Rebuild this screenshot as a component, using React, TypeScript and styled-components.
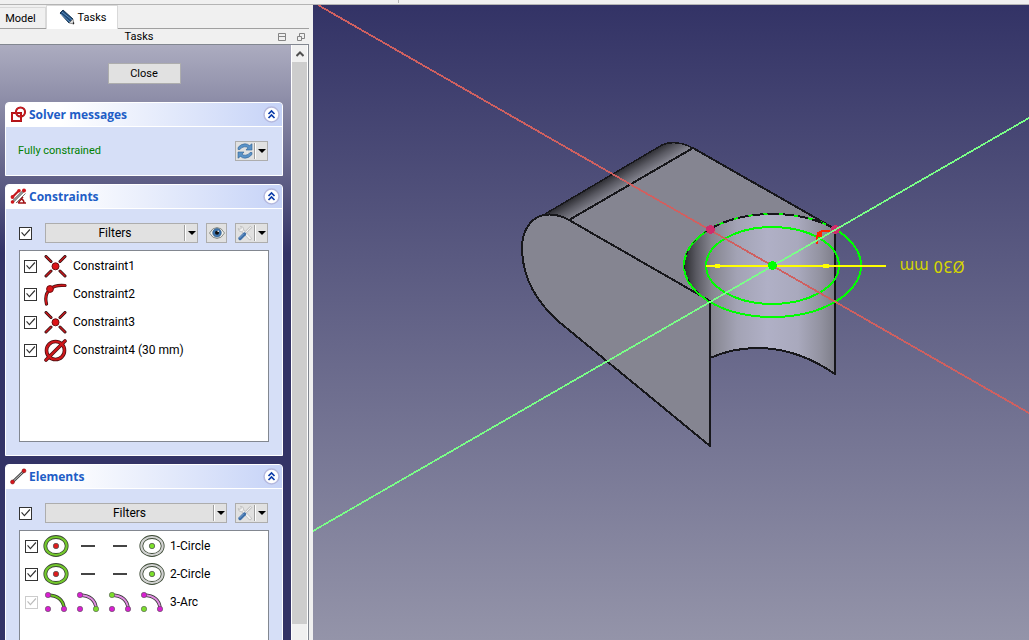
import React from 'react';
import styled, { createGlobalStyle } from 'styled-components';

const GlobalStyle = createGlobalStyle`
  *, *::before, *::after { box-sizing: border-box; }
  body {
    margin: 0;
    background: #f0f0f0;
    color: #000;
    font-family: Roboto, "Open Sans", sans-serif;
    font-size: 11px;
    line-height: 16px;
  }
  button, input { font: inherit; color: inherit; margin: 0; }
`;

const Window = styled.div`
  display: flex;
  flex-direction: column;
  height: 100vh;
  overflow: hidden;
`;

const ToolStrip = styled.div`
  flex: none;
  height: 5px;
  padding-left: 398px;
  border-bottom: 1px solid #b4b4b4;

  &::before {
    content: "";
    display: block;
    width: 1px;
    height: 3px;
    background: #b4b4b4;
  }
`;

const Workspace = styled.div`
  flex: 1;
  min-height: 0;
  display: flex;
`;

const Sidebar = styled.aside`
  flex: none;
  width: 313px;
  padding-right: 4px;
  display: flex;
  flex-direction: column;
`;

const TabBar = styled.div`
  flex: none;
  display: flex;
  align-items: flex-end;
  height: 24px;
  border-bottom: 1px solid #a0a0a0;
`;

const Tab = styled.button<{ $active?: boolean }>`
  display: flex;
  align-items: center;
  justify-content: center;
  gap: 2px;
  width: ${p => (p.$active ? 72 : 46)}px;
  height: ${p => (p.$active ? 24 : 21)}px;
  margin-bottom: ${p => (p.$active ? -1 : 0)}px;
  padding: ${p => (p.$active ? '0' : '2px 4px 0 0')};
  background: ${p => (p.$active ? '#fff' : '#f0f0f0')};
  border: 1px solid #d9d9d9;
  border-bottom: 0;
  border-left-width: ${p => (p.$active ? 1 : 0)}px;
`;

const DockTitle = styled.div`
  flex: none;
  display: grid;
  grid-template-columns: 1fr auto 1fr;
  align-items: center;
  height: 15px;
  padding: 0 3px 0 0;

  h1 { margin: 0 0 0 -28px; font: inherit; grid-column: 2; }
`;

const DockButtons = styled.div`
  display: flex;
  justify-content: flex-end;
  gap: 8px;
`;

const GhostButton = styled.button`
  display: flex;
  padding: 0;
  border: 0;
  background: none;
`;

const DockBody = styled.div`
  flex: 1;
  min-height: 0;
  display: flex;
  border-top: 1px solid #828790;
  border-right: 1px solid #828790;
`;

const TaskArea = styled.div`
  flex: 1;
  min-width: 0;
  display: flex;
  flex-direction: column;
  gap: 8px;
  overflow: hidden;
  padding: 18px 8px 0 5px;
  background: linear-gradient(#acacc0 0, #9090aa 50px, #333366 208px);
`;

const CloseButton = styled.button`
  align-self: center;
  flex: none;
  width: 73px;
  height: 21px;
  margin-bottom: 10px;
  padding: 0;
  border: 1px solid #adadad;
  background: #e1e1e1;
`;

const ScrollBar = styled.div`
  flex: none;
  width: 17px;
  display: flex;
  flex-direction: column;
  border-left: 1px solid #fff;
  border-right: 1px solid #fff;
  background: #f0f0f0;
`;

const ScrollArrow = styled.button`
  display: flex;
  align-items: center;
  justify-content: center;
  height: 17px;
  padding: 0;
  border: 0;
  background: none;
`;

const ScrollThumb = styled.div`
  flex: 1;
  margin-bottom: 16px;
  background: #cdcdcd;
`;

const Group = styled.section`
  flex: none;
  overflow: hidden;
  border: 1px solid #fff;
  border-radius: 4px 4px 0 0;
  background: #d6dff7;
`;

const GroupHeader = styled.header`
  display: flex;
  align-items: center;
  gap: 2px;
  height: 24px;
  padding: 0 2px 0 4px;
  border-bottom: 1px solid #fff;
  background: linear-gradient(90deg, #fff 20%, #c6d3f7);

  h2 {
    flex: 1;
    margin: 0;
    font-family: "Open Sans", "Noto Sans", sans-serif;
    font-size: 12px;
    line-height: 16px;
    font-weight: 700;
    color: #215dc6;
  }
`;

const GroupBody = styled.div<{ $compact?: boolean }>`
  padding: ${p => (p.$compact ? '14px 14px 14px 12px' : '14px 13px 13px')};
`;

const Bar = styled.div`
  display: flex;
  align-items: center;
  gap: 8px;
  height: 20px;
  margin: 0 1px 7px 0;

  > input { margin-right: 5px; }
`;

const SolverRow = styled.div`
  display: flex;
  align-items: center;
  justify-content: space-between;
  height: 20px;
  color: #008000;
`;

const Tool = styled.button<{ $width?: number }>`
  display: flex;
  align-items: center;
  ${p => (p.$width ? `flex: none; width: ${p.$width}px;` : 'flex: 1;')}
  height: 20px;
  padding: 0;
  border: 1px solid #adadad;
  background: #e1e1e1;
`;

const ToolFace = styled.span`
  flex: 1;
  display: flex;
  align-items: center;
  justify-content: center;
  font-size: 12px;
`;

const DropArrow = styled.span`
  flex: none;
  display: flex;
  align-items: center;
  justify-content: center;
  width: 13px;
  height: 16px;
  padding-left: 1px;
  border-left: 1px solid #a0a0a0;
  box-shadow: inset 1px 0 #fff;

  &::after {
    content: "";
    border: 4px solid transparent;
    border-top-color: #000;
    border-bottom: 0;
  }
`;

const Check = styled.input.attrs({ type: 'checkbox' })`
  appearance: none;
  flex: none;
  width: 13px;
  height: 13px;
  border: 1px solid #333;
  background: #fff;

  &:checked::before {
    content: "";
    display: block;
    width: 11px;
    height: 11px;
    background: #333;
    clip-path: polygon(10% 48%, 18% 40%, 40% 66%, 86% 14%, 94% 22%, 40% 82%);
  }
  &:disabled { border-color: #ccc; }
  &:disabled::before { background: #bcbcbc; }
`;

const List = styled.ul<{ $indent: number }>`
  margin: 0;
  padding: 1px ${p => p.$indent}px;
  list-style: none;
  height: 192px;
  border: 1px solid #828790;
  background: #fff;
  font-size: 12px;
`;

const Item = styled.li`
  label {
    display: flex;
    align-items: center;
    height: 28px;
  }
`;

const ItemIcon = styled.span`
  display: flex;
  margin: 0 6px 0 7px;
`;

const ElementIcons = styled.span`
  display: flex;
  gap: 6px;
  margin: 0 5px 0 5px;
`;

const Viewport = styled.main`
  flex: 1;
  min-width: 0;
  background: linear-gradient(#333366, #9494a9);

  svg { display: block; width: 100%; height: 100%; }
`;

const PencilIcon = () => (
  <svg width="18" height="18" viewBox="0 0 18 18" aria-hidden="true">
    <path d="M2 4 5 1 15 10 11 14Z" fill="#204a77" stroke="#173655" />
    <path d="M3 5 12 13M4 3 14 11" stroke="#5f93c4" strokeWidth="1" />
    <path d="M11 14 15 10 16 15Z" fill="#ddd" stroke="#555" strokeWidth="0.6" />
    <path d="M14.500 14 16 13V15.500Z" fill="#111" />
  </svg>
);

const CollapseIcon = () => (
  <svg width="17" height="17" viewBox="0 0 17 17" aria-hidden="true">
    <circle cx="8.500" cy="8.500" r="7.500" fill="#fff" stroke="#b5b9de" strokeWidth="1.500" />
    <path d="M5.500 8 8.500 5 11.500 8M5.500 12 8.500 9 11.500 12" fill="none" stroke="#0c3caa" strokeWidth="1.700" />
  </svg>
);

const SketchIcon = () => (
  <svg width="17" height="17" viewBox="0 0 17 17" aria-hidden="true">
    <g fill="none" stroke="#8f0f13" strokeWidth="2">
      <path d="M2 7H11V15H2Z" />
      <circle cx="10.500" cy="6" r="4.500" />
    </g>
    <g fill="none" stroke="#d81b20" strokeWidth="1.200">
      <path d="M2 7H11V15H2Z" />
      <circle cx="10.500" cy="6" r="4.500" />
    </g>
  </svg>
);

const ConstraintsIcon = () => (
  <svg width="17" height="17" viewBox="0 0 17 17" aria-hidden="true">
    <path d="M2.500 14 14 2.500" stroke="#555" strokeWidth="2.400" />
    <path d="M2.500 14 14 2.500" stroke="#ddd" strokeWidth="0.900" />
    <path d="M6 15 15.500 5.500" stroke="#777" strokeWidth="1" />
    <path d="M2 9.500 8.500 3" stroke="#c0151a" strokeWidth="2.200" />
    <path d="M8 15 13 9M8 15H16M11.500 11Q14 12 14 15" fill="none" stroke="#a01216" strokeWidth="1.400" />
    <circle cx="2.500" cy="14" r="1.800" fill="#cf171c" />
    <circle cx="14" cy="2.500" r="2" fill="#cf171c" />
    <circle cx="9" cy="2.800" r="1.800" fill="#cf171c" />
    <circle cx="2.500" cy="9" r="1.900" fill="#cf171c" />
  </svg>
);

const LineIcon = () => (
  <svg width="17" height="17" viewBox="0 0 17 17" aria-hidden="true">
    <path d="M2.500 14 14 3" stroke="#444" strokeWidth="2.600" />
    <path d="M2.500 14 14 3" stroke="#ccc" strokeWidth="1" />
    <circle cx="2.500" cy="14" r="2" fill="#d8161c" stroke="#7d1013" strokeWidth="0.500" />
    <circle cx="14" cy="2.800" r="2" fill="#d8161c" stroke="#7d1013" strokeWidth="0.500" />
  </svg>
);

const RefreshIcon = () => (
  <svg width="16" height="16" viewBox="0 0 16 16" aria-hidden="true">
    <g fill="#5b93c8" stroke="#2f6296" strokeWidth="0.600">
      <path d="M1 6.500V4.500Q4 0.800 8 0.800Q10.500 0.800 12.500 2.600L15 0.800V7H9L11 4.800Q9.500 3.600 7.500 3.800Q4.500 4 3 6.500Z" />
      <path d="M15 9.500V11.500Q12 15.200 8 15.200Q5.500 15.200 3.500 13.400L1 15.200V9H7L5 11.200Q6.500 12.400 8.500 12.200Q11.500 12 13 9.500Z" />
    </g>
  </svg>
);

const EyeIcon = () => (
  <svg width="16" height="14" viewBox="0 0 16 14" aria-hidden="true">
    <path d="M0.500 7Q3.500 1.500 8 1.500T15.500 7Q12.500 12.500 8 12.500T0.500 7Z" fill="#f4f4f0" stroke="#868a85" />
    <circle cx="8" cy="6.800" r="4.300" fill="#3f76ad" stroke="#24507f" strokeWidth="0.600" />
    <circle cx="8" cy="6.800" r="2" fill="#111" />
    <circle cx="9.200" cy="5.300" r="0.800" fill="#fff" />
  </svg>
);

const SettingsIcon = () => (
  <svg width="16" height="16" viewBox="0 0 16 16" aria-hidden="true">
    <path d="M5 5 13 13.500" stroke="#b4b4b4" strokeWidth="3.200" strokeLinecap="round" />
    <path d="M5 5 13 13.500" stroke="#f2f2f2" strokeWidth="2" strokeLinecap="round" />
    <path d="M1.200 3.500Q1.200 6.800 4.800 6.800L6.800 5Q7 1.500 3.500 1.200L4.500 3 3 4.500Z" fill="#f2f2f2" stroke="#b4b4b4" strokeWidth="0.700" />
    <path d="M8 8 14.500 1.500" stroke="#a8a8a8" strokeWidth="2.400" />
    <path d="M8 8 14.500 1.500" stroke="#f0f0f0" strokeWidth="1.200" />
    <path d="M3 13.500 7.500 9" stroke="#3c6ea8" strokeWidth="3.400" strokeLinecap="round" />
    <path d="M2.500 13 6.500 9" stroke="#7ea6d2" strokeWidth="1" strokeLinecap="round" />
  </svg>
);

const CoincidentIcon = () => (
  <svg width="23" height="23" viewBox="0 0 23 23" aria-hidden="true">
    <g strokeLinecap="round">
      <path d="M2 1.500 7 6.500M21 1.500 16 6.500M2 21 7 16M21 21 16 16" stroke="#2b1112" strokeWidth="3" />
      <path d="M2 1.500 7 6.500M21 1.500 16 6.500M2 21 7 16M21 21 16 16" stroke="#c8191d" strokeWidth="1.500" />
    </g>
    <circle cx="11.500" cy="11.300" r="3.500" fill="#dc1418" stroke="#6b1012" />
  </svg>
);

const TangentIcon = () => (
  <svg width="23" height="23" viewBox="0 0 23 23" aria-hidden="true">
    <g fill="none" strokeLinecap="round">
      <path d="M2.500 21Q0 11 6.500 6Q11 1.500 21 2.500" stroke="#3a1011" strokeWidth="3.200" />
      <path d="M2.500 21Q0 11 6.500 6Q11 1.500 21 2.500" stroke="#d0161a" strokeWidth="1.800" />
    </g>
    <circle cx="6" cy="6" r="3.400" fill="#dc1418" stroke="#6b1012" />
  </svg>
);

const DiameterIcon = () => (
  <svg width="23" height="23" viewBox="0 0 23 23" aria-hidden="true">
    <g fill="none" strokeLinecap="round">
      <g stroke="#4a1012" strokeWidth="3.600">
        <circle cx="11.500" cy="11.500" r="9" />
        <path d="M2 21 21 2" />
      </g>
      <g stroke="#cf171b" strokeWidth="2.200">
        <circle cx="11.500" cy="11.500" r="9" />
        <path d="M2 21 21 2" />
      </g>
    </g>
  </svg>
);

const CircleIcon = ({ mode }: { mode: 'edge' | 'none' | 'center' }) => {
  if (mode === 'none') {
    return (
      <svg width="26" height="22" viewBox="0 0 26 22" aria-hidden="true">
        <path d="M6 11H20" stroke="#444" strokeWidth="2" />
      </svg>
    );
  }
  const edge = mode === 'edge';
  return (
    <svg width="26" height="22" viewBox="0 0 26 22" aria-hidden="true">
      <ellipse cx="13" cy="11" rx="10.700" ry="9" fill="#fff" stroke="#3c4a35" strokeWidth="3.800" />
      <ellipse cx="13" cy="11" rx="10.700" ry="9" fill="none" stroke={edge ? '#73c92b' : '#d2d2d2'} strokeWidth="2.100" />
      <circle cx="13" cy="11" r="2.700" fill={edge ? '#e01b1b' : '#7be02a'} stroke="#555" strokeWidth="0.800" />
    </svg>
  );
};

const ArcIcon = ({ active }: { active: 'edge' | 'end' | 'start' | 'center' }) => {
  const dot = (on: boolean) => (on ? '#7bdc2c' : '#d81fd0');
  return (
    <svg width="26" height="22" viewBox="0 0 26 22" aria-hidden="true">
      <path d="M5 4Q20 5 21 17" fill="none" stroke="#333" strokeWidth="3.400" />
      <path d="M5 4Q20 5 21 17" fill="none" stroke={active === 'edge' ? '#6cc31e' : '#e08ce0'} strokeWidth="1.800" />
      <g stroke="#555" strokeWidth="0.600">
        <circle cx="5" cy="4" r="2.700" fill={dot(active === 'start')} />
        <circle cx="5" cy="18" r="2.700" fill={dot(active === 'center')} />
        <circle cx="21" cy="18" r="2.700" fill={dot(active === 'end')} />
      </g>
    </svg>
  );
};

const constraints = [
  { name: 'Constraint1', icon: <CoincidentIcon /> },
  { name: 'Constraint2', icon: <TangentIcon /> },
  { name: 'Constraint3', icon: <CoincidentIcon /> },
  { name: 'Constraint4 (30 mm)', icon: <DiameterIcon /> },
];

const circleIcons = (
  <>
    <CircleIcon mode="edge" />
    <CircleIcon mode="none" />
    <CircleIcon mode="none" />
    <CircleIcon mode="center" />
  </>
);

const elements = [
  { name: '1-Circle', icons: circleIcons },
  { name: '2-Circle', icons: circleIcons },
  {
    name: '3-Arc',
    disabled: true,
    icons: (
      <>
        <ArcIcon active="edge" />
        <ArcIcon active="end" />
        <ArcIcon active="start" />
        <ArcIcon active="center" />
      </>
    ),
  },
];

const GroupTitle = ({ icon, title }: { icon: React.ReactNode; title: string }) => (
  <GroupHeader>
    {icon}
    <h2>{title}</h2>
    <GhostButton aria-label={`Collapse ${title}`}>
      <CollapseIcon />
    </GhostButton>
  </GroupHeader>
);

const Scene = () => (
  <svg viewBox="313 5 716 635" preserveAspectRatio="xMidYMid slice" role="img" aria-label="Sketch on solid">
    <defs>
      <linearGradient id="roundTop" gradientUnits="userSpaceOnUse" x1="600" y1="181" x2="609" y2="196">
        <stop offset="0" stopColor="#2a2a2f" />
        <stop offset="0.500" stopColor="#5a5a63" />
        <stop offset="1" stopColor="#82828d" />
      </linearGradient>
      <linearGradient id="bore" gradientUnits="userSpaceOnUse" x1="684" y1="0" x2="836" y2="0">
        <stop offset="0" stopColor="#2c2c30" />
        <stop offset="0.080" stopColor="#595961" />
        <stop offset="0.180" stopColor="#85858f" />
        <stop offset="0.350" stopColor="#a3a3b5" />
        <stop offset="0.550" stopColor="#b0b0c6" />
        <stop offset="0.750" stopColor="#a9a9bd" />
        <stop offset="0.900" stopColor="#9292a0" />
        <stop offset="1" stopColor="#7c7c87" />
      </linearGradient>
    </defs>
    <g shapeRendering="crispEdges">
      <path d="M545 214 662 145Q675 140 693 148L835 229 710 301V446L558 321C538 303 522 280 522 247C522 232 532 214 545 214Z" fill="#858591" />
      <path d="M545 214 662 145Q675 140 693 148L569 220Q557 213 545 214Z" fill="url(#roundTop)" />
      <path d="M710 301A88.500 51.500 0 0 1 684 265.500A88.500 51.500 0 0 1 772.500 214A88.500 51.500 0 0 1 835 229V374Q797 348 758 348Q732 348 710 358Z" fill="url(#bore)" />
      <g fill="none" stroke="#17171b" strokeWidth="2" strokeLinejoin="round">
        <path d="M569 220C556 213 546 214 540 216C528 221 522 234 522 247C522 280 538 303 558 321L710 446V301L569 220 693 148L835 229V374Q797 348 758 348Q732 348 710 358" />
        <path d="M545 214 662 145Q675 139 693 148" strokeWidth="1.500" />
      </g>
      <g fill="none" strokeWidth="2">
        <ellipse cx="772.500" cy="265.500" rx="66.500" ry="38.500" stroke="#00ff00" />
        <ellipse cx="772.500" cy="265.500" rx="88.500" ry="51.500" stroke="#00ff00" />
        <path d="M710 229A88.500 51.500 0 0 1 835 229" stroke="#17171b" strokeDasharray="11 4" />
        <path d="M710 301A88.500 51.500 0 0 1 710 229" stroke="#17171b" strokeWidth="1" strokeDasharray="4 10" />
      </g>
      <path d="M318 5 1029 413" stroke="#cf6060" strokeWidth="1.800" />
      <path d="M313 531 1029 118" stroke="#7aff88" strokeWidth="1.700" />
      <path d="M706 266H886" stroke="#ffff00" strokeWidth="2" />
      <path d="M712 265 717 264H720V268H717L712 267ZM831 265 826 264H823V268H826L831 267Z" fill="#ffff00" />
      <path d="M817 244V236Q820 229 830 231" fill="none" stroke="#ff2600" strokeWidth="2" />
      <path d="M817 232H822V237H817Z" fill="#ff2600" />
      <circle cx="710.500" cy="229.500" r="4.500" fill="#d02c6c" />
      <circle cx="835.500" cy="229.500" r="4.500" fill="#d02c6c" />
      <path d="M813 242.600 842 225.900" stroke="#7aff88" strokeWidth="1.700" />
      <circle cx="772.500" cy="265.500" r="4.500" fill="#00ff00" />
    </g>
    <text x="932" y="261" textAnchor="middle" transform="rotate(180 932 261)" fill="#d6d600" fontFamily="DejaVu Sans, sans-serif" fontSize="15">
      Ø30 mm
    </text>
  </svg>
);

export default function App() {
  return (
    <>
      <GlobalStyle />
      <Window>
        <ToolStrip />
        <Workspace>
          <Sidebar>
            <TabBar role="tablist">
              <Tab role="tab" aria-selected="false">Model</Tab>
              <Tab role="tab" aria-selected="true" $active>
                <PencilIcon />
                Tasks
              </Tab>
            </TabBar>
            <DockTitle>
              <h1>Tasks</h1>
              <DockButtons>
                <GhostButton aria-label="Auto hide">
                  <svg width="10" height="9" viewBox="0 0 10 9" fill="none" stroke="#858585">
                    <path d="M0.500 0.500H7.500V7.500H0.500ZM0.500 3.500H7.500" />
                  </svg>
                </GhostButton>
                <GhostButton aria-label="Float">
                  <svg width="10" height="9" viewBox="0 0 10 9" fill="none" stroke="#858585">
                    <path d="M1.500 3.500H5.500V7.500H1.500ZM3.500 3.500V0.500H8.500V5.500H5.500" />
                  </svg>
                </GhostButton>
              </DockButtons>
            </DockTitle>
            <DockBody>
              <TaskArea>
                <CloseButton>Close</CloseButton>

                <Group>
                  <GroupTitle icon={<SketchIcon />} title="Solver messages" />
                  <GroupBody $compact>
                    <SolverRow>
                      <span>Fully constrained</span>
                      <Tool $width={33} aria-label="Update">
                        <ToolFace><RefreshIcon /></ToolFace>
                        <DropArrow />
                      </Tool>
                    </SolverRow>
                  </GroupBody>
                </Group>

                <Group>
                  <GroupTitle icon={<ConstraintsIcon />} title="Constraints" />
                  <GroupBody>
                    <Bar>
                      <Check defaultChecked aria-label="Filter constraints" />
                      <Tool>
                        <ToolFace>Filters</ToolFace>
                        <DropArrow />
                      </Tool>
                      <Tool $width={21} aria-label="Show or hide">
                        <ToolFace><EyeIcon /></ToolFace>
                      </Tool>
                      <Tool $width={33} aria-label="Constraint settings">
                        <ToolFace><SettingsIcon /></ToolFace>
                        <DropArrow />
                      </Tool>
                    </Bar>
                    <List $indent={4}>
                      {constraints.map(c => (
                        <Item key={c.name}>
                          <label>
                            <Check defaultChecked />
                            <ItemIcon>{c.icon}</ItemIcon>
                            {c.name}
                          </label>
                        </Item>
                      ))}
                    </List>
                  </GroupBody>
                </Group>

                <Group>
                  <GroupTitle icon={<LineIcon />} title="Elements" />
                  <GroupBody>
                    <Bar>
                      <Check defaultChecked aria-label="Filter elements" />
                      <Tool>
                        <ToolFace>Filters</ToolFace>
                        <DropArrow />
                      </Tool>
                      <Tool $width={33} aria-label="Element settings">
                        <ToolFace><SettingsIcon /></ToolFace>
                        <DropArrow />
                      </Tool>
                    </Bar>
                    <List $indent={5}>
                      {elements.map(e => (
                        <Item key={e.name}>
                          <label>
                            <Check defaultChecked disabled={e.disabled} />
                            <ElementIcons>{e.icons}</ElementIcons>
                            {e.name}
                          </label>
                        </Item>
                      ))}
                    </List>
                  </GroupBody>
                </Group>
              </TaskArea>
              <ScrollBar>
                <ScrollArrow aria-label="Scroll up">
                  <svg width="8" height="6" viewBox="0 0 8 6" fill="none" stroke="#505050" strokeWidth="2">
                    <path d="M0.500 5 4 1.500 7.500 5" />
                  </svg>
                </ScrollArrow>
                <ScrollThumb />
              </ScrollBar>
            </DockBody>
          </Sidebar>
          <Viewport>
            <Scene />
          </Viewport>
        </Workspace>
      </Window>
    </>
  );
}
